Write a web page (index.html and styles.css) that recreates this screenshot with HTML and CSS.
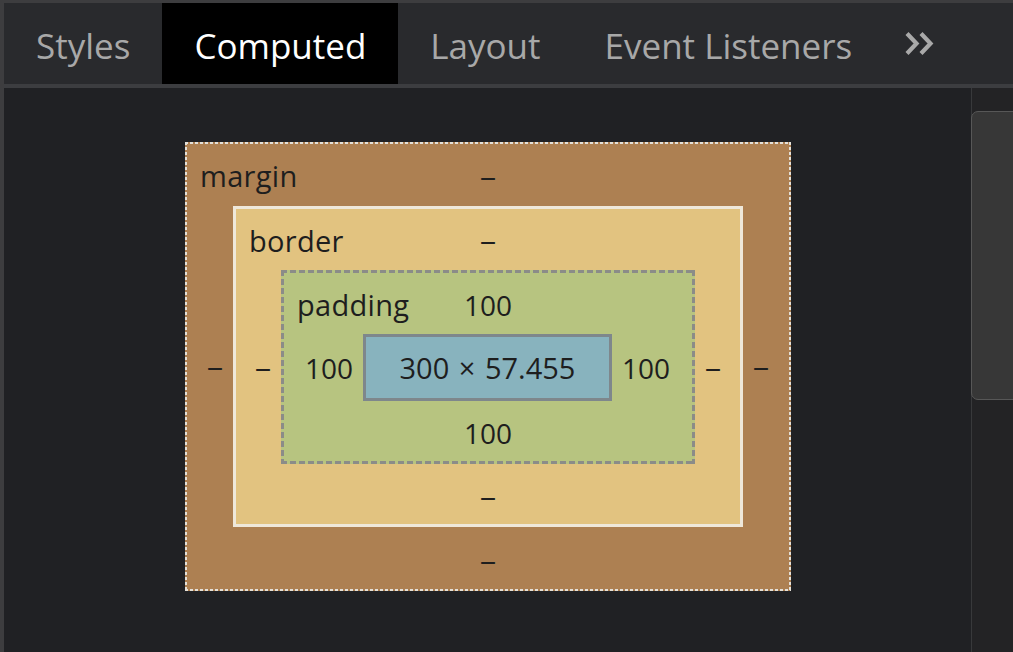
FILE: index.html
```html
<!DOCTYPE html>
<html>
<head>
<meta charset="utf-8">
<link rel="stylesheet" href="styles.css">
</head>
<body>
<div class="panel">
  <div class="tabbar">
    <div class="tab">Styles</div>
    <div class="tab active">Computed</div>
    <div class="tab">Layout</div>
    <div class="tab">Event Listeners</div>
    <div class="more">
      <svg width="30" height="26" viewBox="0 0 30 26">
        <path d="M3 2.5 L12.5 12.5 L3 22.5" fill="none" stroke="#a9a9a9" stroke-width="4.2"/>
        <path d="M17 2.5 L26.5 12.5 L17 22.5" fill="none" stroke="#a9a9a9" stroke-width="4.2"/>
      </svg>
    </div>
  </div>
  <div class="main">
    <div class="content">
      <div class="mbox">
        <div class="row">
          <span class="label">margin</span><span class="val dash">‒</span><span></span>
        </div>
        <div class="side left"><span class="dash">‒</span></div>
        <div class="bbox">
          <div class="row">
            <span class="label">border</span><span class="val dash">‒</span><span></span>
          </div>
          <div class="side left"><span class="dash">‒</span></div>
          <div class="pbox">
            <div class="row">
              <span class="label">padding</span><span class="val">100</span><span></span>
            </div>
            <div class="side left">100</div>
            <div class="cbox">300 × 57.455</div>
            <div class="side right">100</div>
            <div class="row bottom"><span></span><span class="val">100</span><span></span></div>
          </div>
          <div class="side right"><span class="dash">‒</span></div>
          <div class="row bottom"><span></span><span class="val dash">‒</span><span></span></div>
        </div>
        <div class="side right"><span class="dash">‒</span></div>
        <div class="row bottom"><span></span><span class="val dash">‒</span><span></span></div>
      </div>
    </div>
    <div class="scrollbar"><div class="thumb"></div></div>
  </div>
</div>
</body>
</html>
```
FILE: styles.css
```css
html, body {
  margin: 0;
  padding: 0;
  background: #202124;
}
body {
  width: 1013px;
  height: 652px;
  overflow: hidden;
  font-family: "Open Sans", "Noto Sans", sans-serif;
}
.panel {
  width: 1013px;
  height: 652px;
  box-sizing: border-box;
  border-top: 3px solid #3d3d3f;
  border-left: 4px solid #3d3d3f;
  display: flex;
  flex-direction: column;
}
.tabbar {
  height: 81px;
  flex: none;
  background: #292a2d;
  border-bottom: 4px solid #3c3d40;
  display: flex;
  align-items: stretch;
}
.tab {
  padding: 3px 32px 0;
  font-size: 35px;
  color: #a8a8a8;
  display: flex;
  align-items: center;
}
.tab.active {
  background: #000;
  color: #fff;
}
.more {
  display: flex;
  align-items: center;
  padding-left: 20px;
  padding-top: 1px;
}
.main {
  flex: 1;
  display: flex;
  background: #202124;
}
.content {
  flex: 1;
  padding: 54px 0 0 181px;
}
.scrollbar {
  width: 41px;
  flex: none;
  border-left: 1px solid #38393b;
  background: #232325;
  padding-top: 23px;
}
.thumb {
  height: 287px;
  margin-left: -1px;
  margin-right: -8px;
  background: #373737;
  border: 1px solid #575757;
  border-radius: 7px;
}

/* box model */
.mbox, .bbox, .pbox {
  display: grid;
  color: #1e1e1e;
  font-size: 28px;
  line-height: 36px;
}
.mbox {
  width: 606px;
  box-sizing: border-box;
  padding: 2px;
  grid-template-columns: 46px 510px 46px;
  grid-template-rows: 62px 321px 62px;
  background:
    repeating-linear-gradient(90deg, #e4e0d8 0 3px, transparent 3px 5px) top left / 100% 2px no-repeat,
    repeating-linear-gradient(90deg, #e4e0d8 0 3px, transparent 3px 5px) bottom left / 100% 2px no-repeat,
    repeating-linear-gradient(180deg, #e4e0d8 0 3px, transparent 3px 5px) top left / 2px 100% no-repeat,
    repeating-linear-gradient(180deg, #e4e0d8 0 3px, transparent 3px 5px) top right / 2px 100% no-repeat,
    #ad8052;
}
.bbox {
  border: 3px solid #efe8da;
  background: #e2c380;
  grid-template-columns: 45px 414px 45px;
  grid-template-rows: 61px 194px 60px;
}
.pbox {
  width: 414px;
  box-sizing: border-box;
  padding: 3px;
  grid-template-columns: 79px 249px 80px;
  grid-template-rows: 61px 67px 60px;
  background:
    repeating-linear-gradient(90deg, #8b8c88 0 6px, transparent 6px 9px) top left / 100% 3px no-repeat,
    repeating-linear-gradient(90deg, #8b8c88 0 6px, transparent 6px 9px) bottom left / 100% 3px no-repeat,
    repeating-linear-gradient(180deg, #8b8c88 0 6px, transparent 6px 9px) top left / 3px 100% no-repeat,
    repeating-linear-gradient(180deg, #8b8c88 0 6px, transparent 6px 9px) top right / 3px 100% no-repeat,
    #b7c480;
}
.row {
  grid-column: 1 / -1;
  display: grid;
  grid-template-columns: 1fr auto 1fr;
  align-items: center;
  padding-top: 2px;
}
.row.bottom {
  padding-top: 4px;
}
.dash {
  padding-top: 3px;
}
.label {
  padding-left: 13px;
  font-size: 29px;
  letter-spacing: 0.3px;
}
.side {
  display: flex;
  align-items: center;
}
.side.left {
  justify-content: flex-end;
  padding-right: 10px;
}
.side.right {
  justify-content: flex-start;
  padding-left: 10px;
}
.cbox {
  border: 3px solid #7e878c;
  background: #88b3be;
  display: flex;
  align-items: center;
  justify-content: center;
  font-size: 29px;
  word-spacing: 2px;
}
```
